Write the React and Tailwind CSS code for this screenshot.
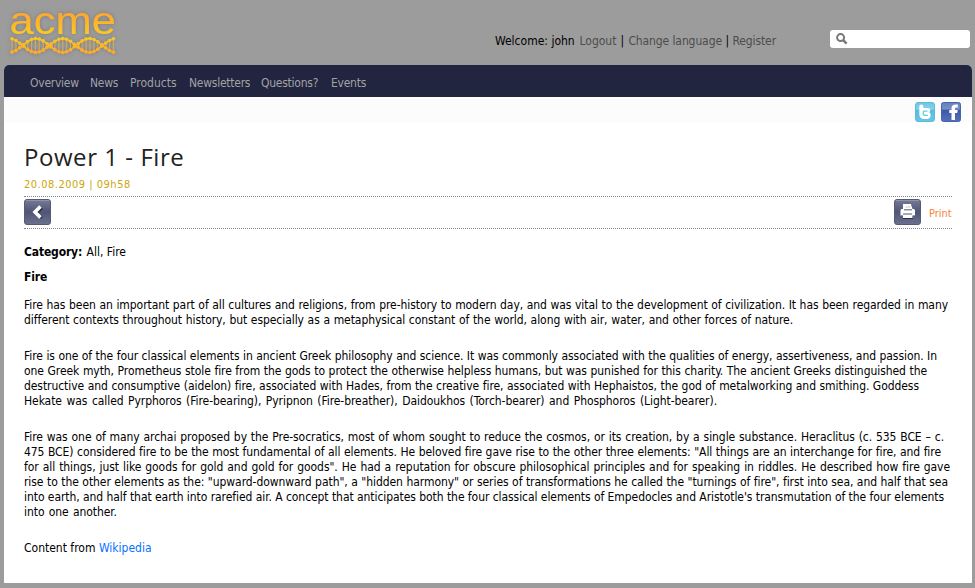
const nav = [
  ['Overview', 'w-[48px]'],
  ['News', 'w-[28px]'],
  ['Products', 'w-[47px]'],
  ['Newsletters', 'w-[60px]'],
  ['Questions?', 'w-[58px]'],
  ['Events', 'w-[36px]'],
];

const paragraphs = [
  [
    ['Fire has been an important part of all cultures and religions, from pre-history to modern day, and was vital to the development of civilization. It has been regarded in many', 'w-[924px]'],
    ['different contexts throughout history, but especially as a metaphysical constant of the world, along with air, water, and other forces of nature.', 'w-[769px]'],
  ],
  [
    ['Fire is one of the four classical elements in ancient Greek philosophy and science. It was commonly associated with the qualities of energy, assertiveness, and passion. In', 'w-[913px]'],
    ['one Greek myth, Prometheus stole fire from the gods to protect the otherwise helpless humans, but was punished for this charity. The ancient Greeks distinguished the', 'w-[903px]'],
    ['destructive and consumptive (aidelon) fire, associated with Hades, from the creative fire, associated with Hephaistos, the god of metalworking and smithing. Goddess', 'w-[895px]'],
    ['Hekate was called Pyrphoros (Fire-bearing), Pyripnon (Fire-breather), Daidoukhos (Torch-bearer) and Phosphoros (Light-bearer).', 'w-[693px]'],
  ],
  [
    ['Fire was one of many archai proposed by the Pre-socratics, most of whom sought to reduce the cosmos, or its creation, by a single substance. Heraclitus (c. 535 BCE – c.', 'w-[920px]'],
    ['475 BCE) considered fire to be the most fundamental of all elements. He beloved fire gave rise to the other three elements: "All things are an interchange for fire, and fire', 'w-[917px]'],
    ['for all things, just like goods for gold and gold for goods". He had a reputation for obscure philosophical principles and for speaking in riddles. He described how fire gave', 'w-[926px]'],
    ['rise to the other elements as the: "upward-downward path", a "hidden harmony" or series of transformations he called the "turnings of fire", first into sea, and half that sea', 'w-[924px]'],
    ["into earth, and half that earth into rarefied air. A concept that anticipates both the four classical elements of Empedocles and Aristotle's transmutation of the four elements", 'w-[920px]'],
    ['into one another.', 'w-[93px]'],
  ],
];

function Line({ text, width }) {
  return <span className={`block whitespace-nowrap [text-align-last:justify] ${width}`}>{text}</span>;
}

function Logo() {
  const columns = Array.from({ length: 27 }, (_, i) => i * 3.9 + 12);
  const wave = (x) => Math.sin(((x - 22.6) / 26.7) * Math.PI) * 7;
  return (
    <svg width="125" height="65" viewBox="0 0 125 65" role="img" aria-label="acme" className="block">
      <defs>
        <linearGradient id="word" x1="0" y1="12" x2="0" y2="36" gradientUnits="userSpaceOnUse">
          <stop offset="0" stopColor="#ffa52b" />
          <stop offset="1" stopColor="#fbcb24" />
        </linearGradient>
        <linearGradient id="helix" x1="0" y1="37" x2="0" y2="54" gradientUnits="userSpaceOnUse">
          <stop offset="0" stopColor="#f7ca23" />
          <stop offset="1" stopColor="#ffa52b" />
        </linearGradient>
        <filter id="glow" x="-10%" y="-20%" width="120%" height="140%">
          <feDropShadow dx="0" dy="0" stdDeviation="2" floodColor="#555" floodOpacity="0.55" />
        </filter>
      </defs>
      <g filter="url(#glow)">
        <text x="9.5" y="33.700" fontSize="39" textLength="106.500" lengthAdjust="spacingAndGlyphs" fill="url(#word)" className="font-['Liberation_Sans',sans-serif] [font-stretch:normal]">acme</text>
        <g stroke="#f5b92b" strokeWidth="0.8" opacity="0.75">
          {columns.map((x) => (
            <line key={x} x1={x} x2={x} y1={45.5 - wave(x)} y2={45.5 + wave(x)} />
          ))}
        </g>
        <g fill="url(#helix)">
          {columns.map((x) => (
            <g key={x}>
              <circle cx={x} cy={45.5 - wave(x)} r="1.8" />
              <circle cx={x} cy={45.5 + wave(x)} r="1.8" />
            </g>
          ))}
        </g>
        <g stroke="url(#helix)" fill="none" strokeWidth="1.4">
          <polyline points={columns.map((x) => `${x},${45.5 - wave(x)}`).join(' ')} />
          <polyline points={columns.map((x) => `${x},${45.5 + wave(x)}`).join(' ')} />
        </g>
      </g>
    </svg>
  );
}

function TwitterIcon() {
  return (
    <svg width="20" height="20" viewBox="0 0 20 20">
      <defs>
        <linearGradient id="tw" x2="0" y2="1">
          <stop stopColor="#70c5e2" /><stop offset="0.35" stopColor="#83d4ec" /><stop offset="0.4" stopColor="#54bddf" /><stop offset="1" stopColor="#62c8e5" />
        </linearGradient>
      </defs>
      <rect x="0.5" y="0.5" width="19" height="19" rx="2.5" fill="url(#tw)" stroke="#62b9d6" />
      <path d="M4.300 4.600c0-1.300 1-2 2-2s2 .8 2 2v1.300h4.700c3 0 3 4 .3 4.200 3.200.2 3.500 6.500-.8 6.800H9.500c-3.200 0-5.200-1.900-5.200-5z" fill="#fff" />
      <path d="M8.300 9.200H12.500M8.300 9.200v2.200c0 1.400.7 2 2 2h2.600" fill="none" stroke="#6bc8e5" strokeWidth="1.300" />
    </svg>
  );
}

function FacebookIcon() {
  return (
    <svg width="20" height="20" viewBox="0 0 20 20">
      <defs>
        <linearGradient id="fb" x2="0" y2="1">
          <stop stopColor="#6580be" /><stop offset="0.35" stopColor="#7790c9" /><stop offset="0.4" stopColor="#3c59a8" /><stop offset="1" stopColor="#5271bd" />
        </linearGradient>
      </defs>
      <rect x="0.5" y="0.5" width="19" height="19" rx="2" fill="url(#fb)" stroke="#4965a9" />
      <path d="M10.500 18V11H8.300V8h2.200V6.400C10.500 3.800 12 2.500 14.600 2.500h2.200v3h-1.500c-1 0-1.300.5-1.300 1.300V8h2.700l-.4 3H14v7z" fill="#fff" />
    </svg>
  );
}

function ButtonFrame({ children }) {
  return (
    <svg width="27" height="26" viewBox="0 0 27 26">
      <defs>
        <linearGradient id="button" x2="0" y2="1">
          <stop stopColor="#777b97" /><stop offset="0.5" stopColor="#505575" /><stop offset="1" stopColor="#6c718f" />
        </linearGradient>
      </defs>
      <rect x="0.5" y="0.5" width="26" height="25" rx="2.5" fill="url(#button)" stroke="#555a76" />
      <path d="M2 1.500h23" stroke="#8f92a8" />
      {children}
    </svg>
  );
}

export default function App() {
  return (
    <div className="flex h-[588px] w-[975px] flex-col overflow-hidden bg-[#9c9c9c] font-['DejaVu_Sans_Condensed','DejaVu_Sans',sans-serif] text-[12px] leading-[15px] text-black [font-stretch:condensed]">
      <header className="flex h-[65px] shrink-0 items-start">
        <Logo />
        <div className="ml-[370px] mt-[34px] flex w-[281px] gap-[4px] whitespace-nowrap text-[12px] tracking-[-0.1px]">
          <span className="w-[81px] tracking-normal">Welcome: john</span>
          <a className="w-[37px] tracking-normal text-[#4c4c4c]">Logout</a>
          <span className="w-[4px]">|</span>
          <a className="w-[93px] text-[#4c4c4c]">Change language</a>
          <span className="w-[3px]">|</span>
          <a className="text-[#4c4c4c]">Register</a>
        </div>
        <div className="ml-[54px] mt-[30px] flex h-[18px] w-[140px] items-center rounded-[3px] bg-white pl-[6px]">
          <svg width="12" height="12" viewBox="0 0 12 12" fill="none" stroke="#777" strokeWidth="2">
            <circle cx="4.600" cy="4.600" r="3.500" />
            <path d="m7.200 7.200 3.400 3.400" strokeWidth="2.400" />
          </svg>
        </div>
      </header>
      <main className="ml-1 h-[518px] w-[968px] shrink-0 rounded-t-[5px] bg-white">
        <nav className="flex h-8 gap-[12px] rounded-t-[5px] bg-[#21253f] pl-[26px] pt-[11px] tracking-[-0.25px] text-[#a2a2a5]">
          {nav.map(([label, width]) => (
            <a key={label} className={`whitespace-nowrap ${width} ${label === 'Products' ? 'tracking-normal' : ''}`}>{label}</a>
          ))}
        </nav>
        <div className="flex h-[25px] justify-end gap-[6px] bg-[#fcfcfc] pr-[11px] pt-[5px]">
          <TwitterIcon />
          <FacebookIcon />
        </div>
        <article className="pl-5">
          <h1 className="h-[55px] whitespace-nowrap pt-[20px] font-['Open_Sans',sans-serif] text-[24px] leading-[30px] tracking-[0.55px] text-[#222] [font-stretch:normal]">Power 1 - Fire</h1>
          <div className="h-[19px] whitespace-nowrap font-['DejaVu_Sans',sans-serif] text-[11px] leading-[16px] tracking-[0.5px] text-[#cda50d]">20.08.2009 | 09h58</div>
          <div className="flex h-[33px] w-[928px] items-start justify-between border-y border-dotted border-[#888] pt-[2px]">
            <ButtonFrame>
              <path d="m18 9-5 5 5 5" fill="none" stroke="#292d44" strokeWidth="2.500" />
              <path d="m16.500 7.500-5.500 5.500 5.500 5.500" fill="none" stroke="#fff" strokeWidth="3.600" />
            </ButtonFrame>
            <div className="flex items-center gap-[8px]">
              <ButtonFrame>
                <path d="M10 6h8v5h3v6h-2v3H9v-3H7v-6h3z" fill="#2c304a" />
                <path d="M9 5h8l1.500 5h1.500l1 1v5.500H18.500V19H9v-2.500H6.500V11l1-1H9z" fill="#fff" />
                <path d="M10 10.800h8M9 15h9" stroke="#53576c" />
                <path d="M11.500 8h5" stroke="#c5c7d0" />
              </ButtonFrame>
              <a className="relative top-px w-[23px] whitespace-nowrap text-[11px] text-[#fb8334]">Print</a>
            </div>
          </div>
          <p className="mt-[16px] whitespace-nowrap"><b className="mr-px tracking-[-0.150px]">Category:</b> All, Fire</p>
          <p className="mt-[10px] font-bold tracking-[-0.1px]">Fire</p>
          <div className="mt-[13px] flex flex-col gap-[21px] tracking-[-0.065px]">
            {paragraphs.map((lines, i) => (
              <p key={i}>
                {lines.map(([text, width]) => <Line key={text} text={text} width={width} />)}
              </p>
            ))}
            <p className="tracking-normal">Content from <a className="text-[#0872ff]">Wikipedia</a></p>
          </div>
        </article>
      </main>
    </div>
  );
}
